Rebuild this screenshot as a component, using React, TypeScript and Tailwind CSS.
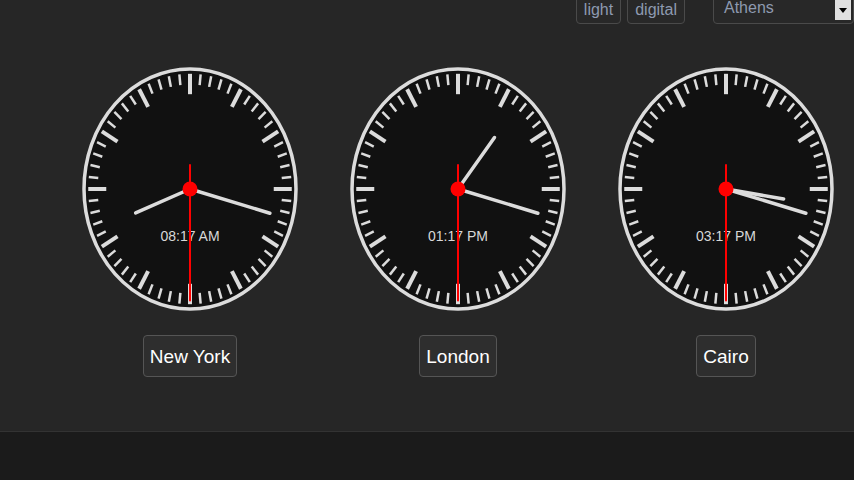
import React from 'react';

type ClockInfo = { city: string; h: number; m: number; s: number; label: string };

const clocks: ClockInfo[] = [
  { city: 'New York', h: 8, m: 17, s: 30, label: '08:17 AM' },
  { city: 'London', h: 13, m: 17, s: 30, label: '01:17 PM' },
  { city: 'Cairo', h: 15, m: 17, s: 30, label: '03:17 PM' },
];

const W = 216;
const H = 244;
const CX = 108;
const CY = 122;
const RX = 106;
const RY = 120;

// point on the (elliptical) dial, angle in degrees clockwise from 12
const pt = (deg: number, f: number) => {
  const a = (deg * Math.PI) / 180;
  return { x: CX + f * RX * Math.sin(a), y: CY - f * RY * Math.cos(a) };
};

const Hand = ({ deg, len, tail = 0, color, width }: { deg: number; len: number; tail?: number; color: string; width: number }) => {
  const p1 = pt(deg + 180, tail);
  const p2 = pt(deg, len);
  return <line x1={p1.x} y1={p1.y} x2={p2.x} y2={p2.y} stroke={color} strokeWidth={width} strokeLinecap="round" />;
};

const Clock: React.FC<{ c: ClockInfo }> = ({ c }) => {
  const secDeg = c.s * 6;
  const minDeg = (c.m + c.s / 60) * 6;
  const hourDeg = ((c.h % 12) + c.m / 60 + c.s / 3600) * 30;

  return (
    <svg width={W} height={H} viewBox={`0 0 ${W} ${H}`}>
      <ellipse cx={CX} cy={CY} rx={RX} ry={RY} fill="#111111" stroke="#dcdcdc" strokeWidth={3.5} />
      {Array.from({ length: 60 }).map((_, i) => {
        const major = i % 5 === 0;
        const p1 = pt(i * 6, major ? 0.79 : 0.87);
        const p2 = pt(i * 6, 0.96);
        return (
          <line
            key={i}
            x1={p1.x}
            y1={p1.y}
            x2={p2.x}
            y2={p2.y}
            stroke="#dcdcdc"
            strokeWidth={major ? 4 : 2.5}
          />
        );
      })}
      <text
        x={CX}
        y={CY + 52}
        textAnchor="middle"
        fill="#d8d8d8"
        fontSize={14}
        fontFamily="'Liberation Sans', Arial, sans-serif"
      >
        {c.label}
      </text>
      <Hand deg={hourDeg} len={0.55} color="#dcdcdc" width={3.5} />
      <Hand deg={minDeg} len={0.78} color="#dcdcdc" width={3.5} />
      <Hand deg={secDeg} len={0.93} tail={0.2} color="#ff0000" width={2} />
      <circle cx={CX} cy={CY} r={7.5} fill="#ff0000" />
    </svg>
  );
};

export default function App() {
  return (
    <div className="w-[854px] h-[480px] overflow-hidden bg-[#1b1b1b] font-['Liberation_Sans',Arial,sans-serif]">
      <div className="h-[432px] bg-[#262626] border-b border-[#333333] flex flex-col">
        {/* top controls, partly scrolled out of view */}
        <div className="flex items-start justify-end -mt-[10px] h-[34px]">
          <button className="h-[34px] px-[7px] pt-[5px] border border-[#4a4a4a] rounded-[4px] text-[16px] leading-[20px] text-[#8e9ab0] bg-[#282828]">
            light
          </button>
          <button className="ml-[6px] h-[34px] px-[7px] pt-[5px] border border-[#4a4a4a] rounded-[4px] text-[16px] leading-[20px] text-[#8e9ab0] bg-[#282828]">
            digital
          </button>
          <div className="ml-[28px] w-[141px] h-[34px] border border-[#4a4a4a] rounded-[4px] bg-[#282828] flex items-start justify-between pl-[10px]">
            <span className="pt-[7px] text-[16px] leading-[20px] text-[#8e9ab0]">Athens</span>
            <span className="mt-[9px] mr-[2px] w-[16px] h-[20px] bg-[#e0e0e0] flex items-center justify-center">
              <svg width="8" height="5" viewBox="0 0 8 5">
                <polygon points="0,0 8,0 4,5" fill="#000" />
              </svg>
            </span>
          </div>
        </div>

        <div className="flex pl-[56px] mt-[43px]">
          {clocks.map((c) => (
            <div key={c.city} className="w-[268px] shrink-0 flex flex-col items-center">
              <Clock c={c} />
              <button className="mt-[24px] h-[42px] px-[6px] border border-[#555555] rounded-[4px] bg-[#2e2e2e] text-white text-[19px] leading-none">
                {c.city}
              </button>
            </div>
          ))}
        </div>
      </div>
    </div>
  );
}
